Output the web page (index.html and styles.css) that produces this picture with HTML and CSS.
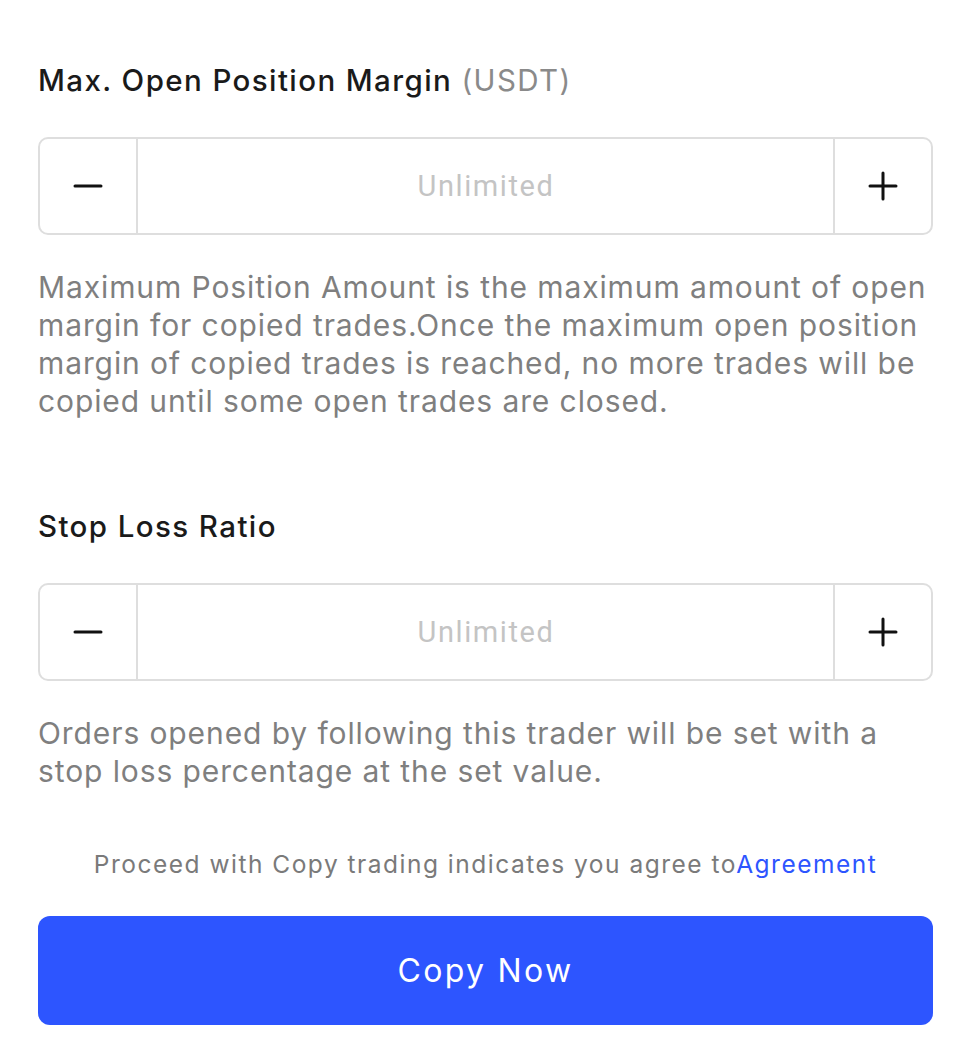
FILE: index.html
```html
<!DOCTYPE html>
<html lang="en">
<head>
<meta charset="utf-8">
<title>Copy settings</title>
<link rel="stylesheet" href="styles.css">
</head>
<body>
<main class="page">
  <section class="field first">
    <h2 class="label">Max. Open Position Margin <span class="unit">(USDT)</span></h2>
    <div class="stepper">
      <button class="step" aria-label="decrease">
        <svg width="30" height="30" viewBox="0 0 30 30"><path d="M2 15H28" stroke="#111" stroke-width="3" stroke-linecap="round"/></svg>
      </button>
      <div class="value">Unlimited</div>
      <button class="step" aria-label="increase">
        <svg width="30" height="30" viewBox="0 0 30 30"><path d="M2 15H28M15 2V28" stroke="#111" stroke-width="3" stroke-linecap="round"/></svg>
      </button>
    </div>
    <p class="desc">Maximum Position Amount is the maximum amount of open margin for copied trades.Once the maximum open position margin of copied trades is reached, no more trades will be copied until some open trades are closed.</p>
  </section>
  <section class="field second">
    <h2 class="label">Stop Loss Ratio</h2>
    <div class="stepper">
      <button class="step" aria-label="decrease">
        <svg width="30" height="30" viewBox="0 0 30 30"><path d="M2 15H28" stroke="#111" stroke-width="3" stroke-linecap="round"/></svg>
      </button>
      <div class="value">Unlimited</div>
      <button class="step" aria-label="increase">
        <svg width="30" height="30" viewBox="0 0 30 30"><path d="M2 15H28M15 2V28" stroke="#111" stroke-width="3" stroke-linecap="round"/></svg>
      </button>
    </div>
    <p class="desc">Orders opened by following this trader will be set with a stop loss percentage at the set value.</p>
  </section>
  <p class="agree">Proceed with Copy trading indicates you agree to<a class="link" href="#">Agreement</a></p>
  <button class="cta">Copy Now</button>
</main>
</body>
</html>
```

FILE: styles.css
```css
html, body {
  margin: 0;
  padding: 0;
  background: #ffffff;
}
body {
  font-family: Inter, "Noto Sans", sans-serif;
  color: #1a1a1a;
}
.page {
  padding: 60px 33px 0 38px;
  display: flex;
  flex-direction: column;
}
.field {
  display: flex;
  flex-direction: column;
}
.second {
  margin-top: 86px;
}
.label {
  margin: 0;
  font-size: 29.5px;
  line-height: 40px;
  font-weight: 500;
  letter-spacing: 1.4px;
  color: #1a1a1a;
}
.unit {
  font-weight: 400;
  color: #8a8a8a;
}
.stepper {
  margin-top: 37px;
  height: 98px;
  box-sizing: border-box;
  border: 2px solid #dedede;
  border-radius: 10px;
  display: flex;
  align-items: stretch;
}
.step {
  width: 96px;
  flex: 0 0 96px;
  border: 0;
  background: transparent;
  padding: 0;
  display: flex;
  align-items: center;
  justify-content: center;
}
.value {
  flex: 1;
  border-left: 2px solid #dedede;
  border-right: 2px solid #dedede;
  display: flex;
  align-items: center;
  justify-content: center;
  font-family: Roboto, sans-serif;
  font-size: 29px;
  color: #c4c4c4;
  letter-spacing: 1.6px;
  padding-left: 1px;
}
.desc {
  margin: 33px 0 0;
  font-size: 30px;
  line-height: 38px;
  letter-spacing: 0.9px;
  color: #7f7f7f;
}
.agree {
  margin: 57px 0 0;
  text-align: center;
  font-size: 24.5px;
  line-height: 34px;
  letter-spacing: 1.5px;
  color: #7a7a7a;
}
.link {
  color: #2d55ff;
  text-decoration: none;
}
.cta {
  margin-top: 35px;
  height: 109px;
  border: 0;
  border-radius: 12px;
  background: #2d55ff;
  color: #ffffff;
  font-family: Inter, sans-serif;
  font-size: 32px;
  font-weight: 400;
  letter-spacing: 2.3px;
}
```
